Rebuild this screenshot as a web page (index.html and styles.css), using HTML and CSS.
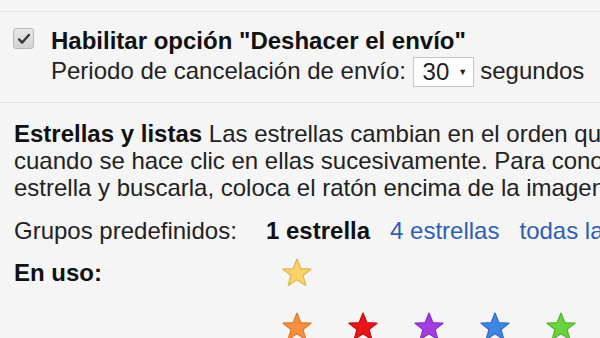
FILE: index.html
```html
<!DOCTYPE html>
<html lang="es">
<head>
<meta charset="utf-8">
<link rel="stylesheet" href="styles.css">
</head>
<body>
<div class="page">
<div class="top-rule"></div>
<section class="undo">
  <span class="checkbox">
    <svg width="18" height="18" viewBox="0 0 20 20"><path d="M4.5 10.5 L8 14 L15.5 5.5" fill="none" stroke="#333" stroke-width="2.6" stroke-linecap="round" stroke-linejoin="round"/></svg>
  </span>
  <div class="undo-text">
    <div class="undo-title">Habilitar opción "Deshacer el envío"</div>
    <div class="undo-period">Periodo de cancelación de envío: <span class="select">30 <span class="arrow">▼</span></span> segundos</div>
  </div>
</section>
<section class="stars">
  <p class="desc"><b>Estrellas y listas</b> Las estrellas cambian en el orden que se muestra a continuación<br>cuando se hace clic en ellas sucesivamente. Para conocer el nombre de una<br>estrella y buscarla, coloca el ratón encima de la imagen.</p>
  <div class="grid">
    <div class="label">Grupos predefinidos:</div>
    <div class="presets"><b>1 estrella</b><a class="link">4 estrellas</a><a class="link">todas las estrellas</a></div>
    <div class="label bold">En uso:</div>
    <div class="star-row">
      <svg class="star" viewBox="1 1 28 28"><polygon class="s-yellow" points="15,2 18.6,11 28,11.4 20.6,17.3 23.2,26.6 15,21.3 6.8,26.6 9.4,17.3 2,11.4 11.4,11"/></svg>
    </div>
    <div class="label"></div>
    <div class="star-row">
      <svg class="star" viewBox="1 1 28 28"><polygon class="s-orange" points="15,2 18.6,11 28,11.4 20.6,17.3 23.2,26.6 15,21.3 6.8,26.6 9.4,17.3 2,11.4 11.4,11"/></svg>
      <svg class="star" viewBox="1 1 28 28"><polygon class="s-red" points="15,2 18.6,11 28,11.4 20.6,17.3 23.2,26.6 15,21.3 6.8,26.6 9.4,17.3 2,11.4 11.4,11"/></svg>
      <svg class="star" viewBox="1 1 28 28"><polygon class="s-purple" points="15,2 18.6,11 28,11.4 20.6,17.3 23.2,26.6 15,21.3 6.8,26.6 9.4,17.3 2,11.4 11.4,11"/></svg>
      <svg class="star" viewBox="1 1 28 28"><polygon class="s-blue" points="15,2 18.6,11 28,11.4 20.6,17.3 23.2,26.6 15,21.3 6.8,26.6 9.4,17.3 2,11.4 11.4,11"/></svg>
      <svg class="star" viewBox="1 1 28 28"><polygon class="s-green" points="15,2 18.6,11 28,11.4 20.6,17.3 23.2,26.6 15,21.3 6.8,26.6 9.4,17.3 2,11.4 11.4,11"/></svg>
    </div>
  </div>
</section>
</div>
</body>
</html>
```
FILE: styles.css
```css
html, body {
  margin: 0;
  padding: 0;
  background: #f5f5f5;
}
.page {
  width: 600px;
  height: 338px;
  overflow: hidden;
  font-family: "Liberation Sans", Arial, sans-serif;
  color: #222;
  font-size: 24px;
}
.top-rule {
  height: 11px;
  border-bottom: 1px solid #e2e2e2;
}
.undo {
  display: flex;
  align-items: flex-start;
  box-sizing: border-box;
  padding: 15px 0 0 13px;
  height: 91px;
  border-bottom: 1px solid #e2e2e2;
}
.checkbox {
  width: 19px;
  height: 19px;
  margin-top: 1px;
  border: 1px solid #b9b9b9;
  border-radius: 3px;
  background: linear-gradient(#e8e8e8, #d4d4d4);
  display: flex;
  align-items: center;
  justify-content: center;
  flex-shrink: 0;
}
.undo-text {
  margin-left: 17px;
  white-space: nowrap;
}
.undo-title {
  font-weight: bold;
  line-height: 28px;
  color: #111;
}
.undo-period {
  line-height: 32px;
}
.select {
  display: inline-flex;
  align-items: center;
  width: 61px;
  height: 30px;
  box-sizing: border-box;
  border: 1px solid #c8c8c8;
  background: #fff;
  padding-left: 9px;
  vertical-align: middle;
  line-height: 28px;
  margin-top: -2px;
}
.arrow {
  font-size: 9px;
  margin-left: 9px;
}
.stars {
  padding: 17px 0 0 14px;
  white-space: nowrap;
}
.desc {
  margin: 0;
  line-height: 27px;
}
.desc b { color: #111; }
.grid {
  display: grid;
  grid-template-columns: 252px auto;
  grid-template-rows: 26px 44px 54px;
  align-items: end;
  margin-top: 17px;
}
.label { line-height: 26px; }
.label.bold { font-weight: bold; color: #111; line-height: 30px; }
.presets { line-height: 26px; }
.presets b { color: #111; }
.link {
  color: #2f5fb3;
  margin-left: 20px;
}
.star-row {
  display: flex;
  gap: 36px;
  padding-left: 16px;
  height: 30px;
}
.star { width: 30px; height: 30px; }
.star polygon { stroke-width: 1.2; stroke-linejoin: round; }
.s-yellow { fill: #fad46b; stroke: #e2b64a; }
.s-orange { fill: #f69140; stroke: #e07a2e; }
.s-red { fill: #e8161b; stroke: #c80d10; }
.s-purple { fill: #a33de0; stroke: #8a2ec6; }
.s-blue { fill: #3f86e4; stroke: #2f6ec8; }
.s-green { fill: #6ad33f; stroke: #55b52e; }
```
